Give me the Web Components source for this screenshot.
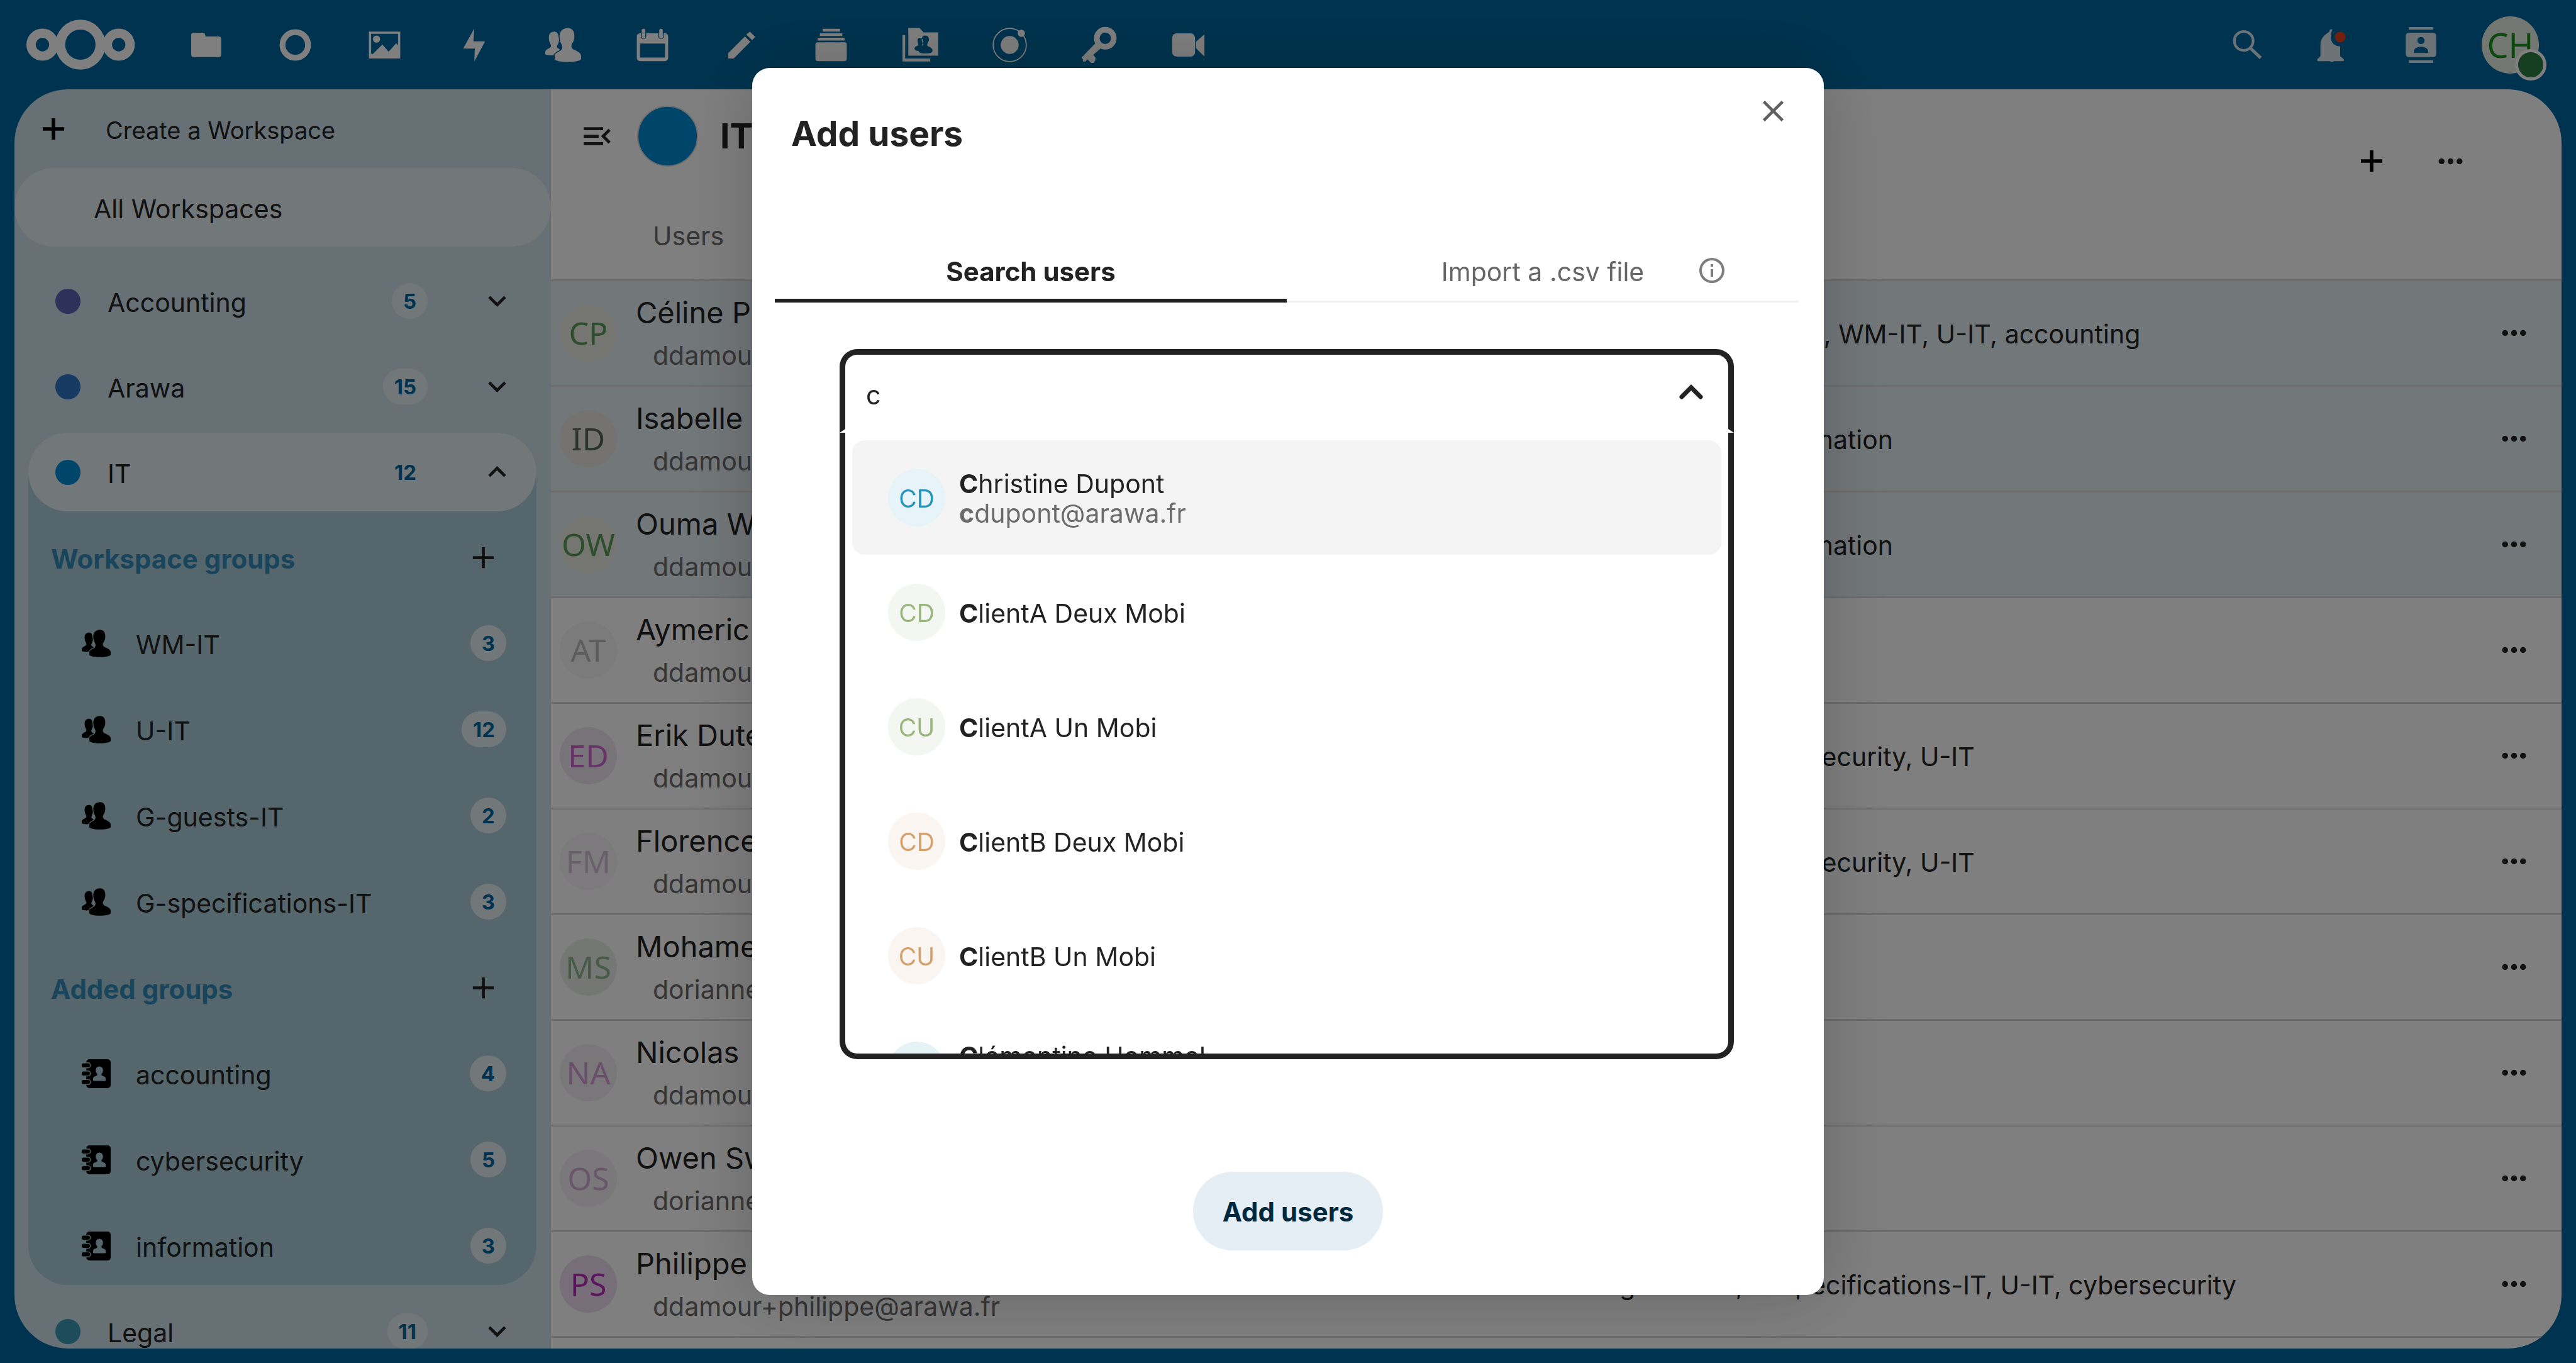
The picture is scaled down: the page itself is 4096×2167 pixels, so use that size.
<!DOCTYPE html>
<html lang="en">
<head>
<meta charset="utf-8">
<title>Workspaces - Add users</title>
<style>
  html, body { margin: 0; height: 100%; }
  body {
    --font: Inter, "Liberation Sans", sans-serif;
    --brand: #00679e;
    --light: #e5eef5;
    --side: #cce1eb;
    --panel: #abcdda;
    --ink: #222222;
    --muted: #6b6b6b;
    font: 400 41px/60px var(--font);
    color: var(--ink);
    background: var(--brand);
    overflow: hidden;
  }
</style>
</head>
<body>
<workspace-app></workspace-app>

<script>
const ICONS = {
  logo: ['0 0 244 112', '<g fill="none" stroke="currentColor"><circle cx="121" cy="56" r="45" stroke-width="22"/><circle cx="36" cy="56" r="25.5" stroke-width="21"/><circle cx="207" cy="56" r="25.5" stroke-width="21"/></g>'],
  folder: ['0 0 80 80', '<path d="M7 18q0-5 5-5h21q4 0 5 4l1 4h29q6 0 6 6v34q0 6-6 6H13q-6 0-6-6z"/>'],
  ring: ['0 0 80 80', '<circle cx="40" cy="40" r="28.5" fill="none" stroke="currentColor" stroke-width="13"/>'],
  photos: ['0 0 80 80', '<path fill-rule="evenodd" d="M5 10h70v60H5zM10 15v45h4l21-21 14 16 17-19 4 5V15z"/><circle cx="22" cy="27" r="8"/>'],
  bolt: ['0 0 80 80', '<path d="M41 3L16 48h26l-1 29 24-45H39z"/>'],
  people: ['0 0 80 80', '<path d="M50 2c10 0 15 7 15 18 0 8-2 13-5 17-3 5-2 10 3 13 9 4 17 7 17 15v6c0 4-12 7-30 7s-29-3-29-7V61c4-3 9-6 14-9 4-4 4-9 1-14-3-5-4-10-4-18C32 9 40 2 50 2z"/><path d="M20 10c-8 0-12 5-12 14 0 7 2 11 4 15s0 6-3 8c-5 3-9 4-9 10v3c0 2 8 4 18 3 2-5 8-8 15-12-1-2-4-3-6-5-2-3 1-6 2-10 2-3 2-8 1-13-1-9-4-13-10-13z"/>'],
  calendar: ['0 0 80 80', '<path fill-rule="evenodd" d="M13 14h1v7a6 6 0 0 0 12 0v-7h27v7a6 6 0 0 0 12 0v-7h2q8 0 8 8v46q0 8-8 8H13q-8 0-8-8V22q0-8 8-8zM12 37v31h56V37z"/><rect x="16" y="4" width="8" height="22" rx="4"/><rect x="55" y="4" width="8" height="22" rx="4"/>'],
  pencil: ['0 0 80 80', '<path d="M10 70V58l37-37 12 12-37 37zM50 17l8-7 12 12-7 7z"/>'],
  deck: ['0 0 80 80', '<path d="M21 4h39v6H21zM15 14h50v6H15zM10 24h60v6H10z"/><rect x="5" y="34" width="70" height="42" rx="5"/>'],
  groupfolder: ['0 0 80 80', '<path d="M0 18h6v52h56v7H0z"/><path fill-rule="evenodd" d="M13 2h25l9 10h33v52H13zM51 19c-5 0-8 3-8 9 0 4 1 7 3 9s0 4-2 5c-1-1 0-3 1-5 2-6 0-13-6-13-5 0-6 5-5 10 1 4 2 5 1 7-5 2-8 3-8 7s4 5 9 5c0 4 4 6 15 6s16-2 16-6c0-5-3-7-8-9-4-2-5-4-3-8 2-3 3-5 3-9 0-5-4-8-8-8z"/>'],
  orbit: ['0 0 80 80', '<circle cx="40" cy="40" r="37" fill="none" stroke="currentColor" stroke-width="2.500"/><circle cx="40" cy="40" r="20"/><circle cx="66" cy="14" r="8"/>'],
  key: ['0 0 80 80', '<circle cx="54" cy="25" r="19" fill="none" stroke="currentColor" stroke-width="12.500"/><path d="M33 35L1 68l3 4v5h6l4-5 8 8h6l4-6v-6l-5-6 20-17z"/>'],
  video: ['0 0 80 80', '<rect x="4" y="14" width="51" height="52" rx="10"/><path d="M57 33l19-17v50L57 47z"/>'],
  search: ['0 0 80 80', '<g fill="none" stroke="currentColor"><circle cx="43" cy="31" r="21" stroke-width="6"/><path d="M59 48l22 21" stroke-width="7"/></g>'],
  bell: ['0 0 80 80', '<path d="M35 10c0-5 4-6 7-4-3 5-4 10-4 16 0 12 7 20 20 21h1v22l8 7v4H8v-4l7-7V38c0-12 8-20 20-28zM34 72h13c-1 8-12 8-13 0z"/><circle cx="59" cy="22" r="12" fill="#e6421c"/>'],
  contacts: ['0 0 80 80', '<path d="M13 0h54v6H13zM13 74h54v6H13z"/><path fill-rule="evenodd" d="M13 13h54q7 0 7 7v40q0 7-7 7H13q-7 0-7-7V20q0-7 7-7zM40 22a8 8 0 1 0 0 16 8 8 0 0 0 0-16zM24 58h32v-4c0-6-8-10-16-10s-16 4-16 10z"/>'],
  book: ['0 0 64 64', '<rect x="10" y="0" width="54" height="64" rx="7"/><g stroke="var(--panel)" stroke-width="2"><rect x="-1" y="8" width="20" height="11" rx="5"/><rect x="-1" y="26" width="20" height="11" rx="5"/><rect x="-1" y="45" width="20" height="11" rx="5"/></g><path fill="var(--panel)" d="M39 16c5 0 8 4 8 8 0 5-1 6-3 8-1 3 0 4 2 5 4 1 7 3 7 6v4q0 1-2 1H27q-2 0-2-1v-4c0-3 3-5 7-6 2-1 3-2 2-5-2-2-3-3-3-8 0-4 3-8 8-8z"/>'],
  boldplus: ['0 0 48 48', '<path d="M20 0h8v20h20v8H28v20h-8V28H0v-8h20z"/>'],
  plus: ['0 0 24 24', '<path d="M19 13h-6v6h-2v-6H5v-2h6V5h2v6h6z"/>'],
  close: ['0 0 24 24', '<path d="M19 6.410L17.590 5 12 10.590 6.410 5 5 6.410 10.590 12 5 17.590 6.410 19 12 13.410 17.590 19 19 17.590 13.410 12z"/>'],
  down: ['0 0 24 24', '<path d="M7.410 8.580L12 13.170l4.590-4.590L18 10l-6 6-6-6z"/>'],
  up: ['0 0 24 24', '<path d="M7.410 15.410L12 10.830l4.590 4.580L18 14l-6-6-6 6z"/>'],
  caret: ['0 0 68 68', '<path d="M19 42l15-15 15 15" fill="none" stroke="currentColor" stroke-width="7" stroke-linecap="round"/>'],
  menu: ['0 0 24 24', '<path d="M21 15.610L19.590 17l-5.010-5 5.010-5L21 8.390 17.440 12zM3 6h13v2H3zM3 13v-2h10v2zM3 18v-2h13v2z"/>'],
  dots: ['0 0 24 24', '<circle cx="6" cy="12" r="2"/><circle cx="12" cy="12" r="2"/><circle cx="18" cy="12" r="2"/>'],
  info: ['0 0 24 24', '<path d="M11 9h2V7h-2m1 13c-4.410 0-8-3.590-8-8s3.590-8 8-8 8 3.590 8 8-3.590 8-8 8m0-18A10 10 0 0 0 2 12a10 10 0 0 0 10 10 10 10 0 0 0 10-10A10 10 0 0 0 12 2m-1 15h2v-6h-2z"/>']
};

const BASE = `
  *, *::before, *::after { box-sizing: border-box; }
  button, a, input { font: inherit; color: inherit; border: 0; background: none; padding: 0; margin: 0; text-align: left; text-decoration: none; outline: 0; border-radius: 0; }
  ul { list-style: none; margin: 0; padding: 0; }
`;

class Base extends HTMLElement {
  connectedCallback() {
    if (this.shadowRoot) return;
    const root = this.attachShadow({ mode: 'open' });
    root.innerHTML = `<style>${BASE}${this.styles()}</style>${this.view()}`;
  }
  get(name) { return this.getAttribute(name) || ''; }
  styles() { return ''; }
  view() { return '<slot></slot>'; }
}

customElements.define('nc-icon', class extends Base {
  styles() { return ':host { display: block; flex: none; width: 57px; height: 57px; } svg { display: block; width: 100%; height: 100%; overflow: visible; }'; }
  view() {
    const [box, body] = ICONS[this.get('name')];
    return `<svg viewBox="${box}" fill="currentColor" aria-hidden="true">${body}</svg>`;
  }
});

customElements.define('nc-avatar', class extends Base {
  styles() {
    return `:host { display: flex; flex: none; align-items: center; justify-content: center; width: 91px; height: 91px; border-radius: 50%;
      font: 400 50px/91px "Noto Sans", sans-serif; background: ${this.get('bg')}; color: ${this.get('fg')}; }
      :host([plain]) { padding-top: 2px; font: 400 39px/89px var(--font); }`;
  }
});

customElements.define('nc-counter', class extends Base {
  styles() {
    return `:host { display: block; flex: none; min-width: 57px; height: 57px; padding: 0 18px; border-radius: 29px; text-align: center;
      font: 700 33px/58px var(--font); background: var(--light); color: var(--brand); }`;
  }
});

customElements.define('app-header', class extends Base {
  styles() {
    return `
    :host { display: flex; align-items: center; height: 142px; padding: 0 59px 0 42px; color: #fff; }
    .logo { width: 173px; height: 80px; margin-right: 84px; }
    nav, .tools { display: flex; align-items: center; gap: 85px; }
    .tools { margin-left: auto; color: #d9e6ee; }
    .me { position: relative; margin-left: -17px; }
    .me nc-avatar { font-size: 54px; }
    .me i { position: absolute; right: -12px; bottom: -11px; width: 50px; height: 50px; border: 5px solid #fff; border-radius: 50%; background: #2d7d41; }
    `;
  }
  view() {
    const apps = ['folder', 'ring', 'photos', 'bolt', 'people', 'calendar', 'pencil', 'deck', 'groupfolder', 'orbit', 'key', 'video'];
    return `<a href="#"><nc-icon class="logo" name="logo"></nc-icon></a>
      <nav>${apps.map(a => `<a href="#" aria-label="${a}"><nc-icon name="${a}"></nc-icon></a>`).join('')}</nav>
      <div class="tools">
        <button aria-label="Search"><nc-icon name="search"></nc-icon></button>
        <button aria-label="Notifications"><nc-icon name="bell"></nc-icon></button>
        <button aria-label="Contacts"><nc-icon name="contacts"></nc-icon></button>
        <button class="me"><nc-avatar bg="#e6efe2" fg="#1c901c">CH</nc-avatar><i></i></button>
      </div>`;
  }
});

customElements.define('workspace-item', class extends Base {
  styles() {
    return `
    :host { display: block; margin-bottom: 11px; }
    .row { display: flex; align-items: center; height: 125px; padding: 0 34px 0 43px; border-radius: 63px; }
    :host([active]) .row { background: var(--light); }
    i { width: 40px; height: 40px; border-radius: 50%; background: ${this.get('color')}; }
    a { flex: 1; padding: 4px 0 0 43px; }
    nc-counter { margin-right: 82px; }
    `;
  }
  view() {
    return `<div class="row"><i></i><a href="#">${this.get('name')}</a><nc-counter>${this.get('count')}</nc-counter>
      <button aria-label="Toggle"><nc-icon name="${this.hasAttribute('active') ? 'up' : 'down'}"></nc-icon></button></div><slot></slot>`;
  }
});

customElements.define('group-heading', class extends Base {
  styles() {
    return `:host { display: flex; align-items: center; justify-content: space-between; height: 125px; margin-bottom: 11px; padding: 0 56px 0 36px;
      font-size: 42px; font-weight: 700; color: #308ab8; } span { padding-top: 4px; } button { color: var(--ink); }`;
  }
  view() { return '<span><slot></slot></span><button aria-label="Add group"><nc-icon name="plus"></nc-icon></button>'; }
});

customElements.define('group-item', class extends Base {
  styles() {
    return `:host { display: flex; align-items: center; height: 125px; margin-bottom: 12px; padding: 0 48px 0 85px; }
      :host(:last-child) { margin-bottom: 0; }
      nc-icon { width: 46px; height: 46px; color: #000; }
      a { flex: 1; padding: 4px 0 0 40px; }`;
  }
  view() { return `<nc-icon name="${this.get('icon')}"></nc-icon><a href="#"><slot></slot></a><nc-counter>${this.get('count')}</nc-counter>`; }
});

customElements.define('workspace-sidebar', class extends Base {
  styles() {
    return `
    :host { display: block; flex: none; width: 853px; background: var(--side); overflow: hidden; }
    .create { display: flex; align-items: center; gap: 66px; width: 100%; height: 125px; padding-left: 45px; font-size: 38px; }
    .create nc-icon { width: 34px; height: 34px; color: #000; }
    .create span { padding-top: 4px; }
    .all { display: flex; align-items: center; height: 125px; margin-bottom: 24px; padding: 4px 0 0 126px; border-radius: 63px; background: var(--light); }
    .list { padding: 0 23px 0 22px; }
    .open { border-radius: 63px; background: var(--panel); margin-bottom: 11px; }
    `;
  }
  view() {
    return `<button class="create"><nc-icon name="boldplus"></nc-icon><span>Create a Workspace</span></button>
    <a class="all" href="#">All Workspaces</a>
    <div class="list">
      <workspace-item name="Accounting" count="5" color="#5c64b4"></workspace-item>
      <workspace-item name="Arawa" count="15" color="#2d74c4"></workspace-item>
      <div class="open">
        <workspace-item active name="IT" count="12" color="#008cd4"></workspace-item>
        <group-heading>Workspace groups</group-heading>
        <group-item icon="people" count="3">WM-IT</group-item>
        <group-item icon="people" count="12">U-IT</group-item>
        <group-item icon="people" count="2">G-guests-IT</group-item>
        <group-item icon="people" count="3">G-specifications-IT</group-item>
        <group-heading>Added groups</group-heading>
        <group-item icon="book" count="4">accounting</group-item>
        <group-item icon="book" count="5">cybersecurity</group-item>
        <group-item icon="book" count="3">information</group-item>
      </div>
      <workspace-item name="Legal" count="11" color="#389bb2"></workspace-item>
    </div>`;
  }
});

const USERS = [
  ['CP', '#ebece4', '#5a9a5a', 'Céline P', 'ddamour', 'G-specifications-IT, WM-IT, U-IT, accounting', 1],
  ['ID', '#eae6e4', '#586458', 'Isabelle', 'ddamour', 'WM-IT, U-IT, information', 1],
  ['OW', '#ebece4', '#5a9a5a', 'Ouma W', 'ddamour', 'WM-IT, U-IT, information', 1],
  ['AT', '#f6f6f6', '#b8bcb8', 'Aymeric', 'ddamour', 'U-IT'],
  ['ED', '#f0e4f2', '#cc68d0', 'Erik Dute', 'ddamour', 'accounting, cybersecurity, U-IT'],
  ['FM', '#f8f5f8', '#d4c0d6', 'Florence', 'ddamour', 'accounting, cybersecurity, U-IT'],
  ['MS', '#e8efe8', '#90b490', 'Mohame', 'dorianne', 'U-IT'],
  ['NA', '#f3eef4', '#d49cd6', 'Nicolas', 'ddamour', 'G-specifications-IT'],
  ['OS', '#f5f0f5', '#d4acd6', 'Owen Sw', 'dorianne', 'U-IT'],
  ['PS', '#f0dcf2', '#b82cbc', 'Philippe', 'ddamour+philippe@arawa.fr', 'G-guests-IT, G-specifications-IT, U-IT, cybersecurity']
];

customElements.define('user-table', class extends Base {
  styles() {
    return `
    :host { display: block; }
    table { width: 100%; table-layout: fixed; border-spacing: 0; }
    .users { width: 51.6%; } .more { width: 104px; }
    th { height: 138px; padding: 0 0 0 162px; text-align: left; font-weight: 400; color: var(--muted); }
    td { height: 168px; padding: 0; border-top: 3px solid #dbdbdb; white-space: nowrap; }
    tr:last-child td { height: 171px; border-bottom: 3px solid #dbdbdb; }
    .sel td { background: var(--light); }
    .user { display: flex; align-items: center; gap: 30px; padding-left: 14px; }
    .user p { margin: 0; padding-top: 2px; line-height: 68px; }
    .name { display: block; font-size: 47px; }
    .mail { display: block; padding-left: 27px; color: var(--muted); }
    td:nth-child(2) { padding-top: 3px; }
    button { display: block; }
    `;
  }
  view() {
    const rows = USERS.map(([ini, bg, fg, name, mail, groups, sel]) => `<tr class="${sel ? 'sel' : ''}">
      <td><div class="user"><nc-avatar bg="${bg}" fg="${fg}">${ini}</nc-avatar><p><span class="name">${name}</span><span class="mail">${mail}</span></p></div></td>
      <td>${groups}</td>
      <td><button aria-label="Actions"><nc-icon name="dots"></nc-icon></button></td></tr>`).join('');
    return `<table><colgroup><col class="users"><col><col class="more"></colgroup>
      <thead><tr><th colspan="3">Users</th></tr></thead><tbody>${rows}</tbody></table>`;
  }
});

customElements.define('workspace-main', class extends Base {
  styles() {
    return `
    :host { display: block; flex: 1; min-width: 0; background: #fff; overflow: hidden; }
    .bar { display: flex; justify-content: space-between; height: 164px; }
    .title { display: flex; align-items: center; height: 148px; padding-left: 45px; }
    .title i { width: 97px; height: 97px; margin: 0 35px; border-radius: 50%; border: 2px solid #dbdbdb; background: #008cd4; }
    h1 { margin: 0; font-size: 55px; font-weight: 700; }
    .actions { display: flex; align-items: center; align-self: flex-end; gap: 80px; height: 100px; padding-right: 148px; }
    .plus { width: 34px; height: 34px; color: #000; }
    `;
  }
  view() {
    return `<div class="bar">
      <div class="title"><button aria-label="Close navigation"><nc-icon name="menu"></nc-icon></button><i></i><h1>IT</h1></div>
      <div class="actions"><button aria-label="Add"><nc-icon class="plus" name="boldplus"></nc-icon></button><button aria-label="More"><nc-icon name="dots"></nc-icon></button></div>
    </div><user-table></user-table>`;
  }
});

customElements.define('user-select', class extends Base {
  styles() {
    return `
    :host { display: block; margin: 74px 143px 0 139px; }
    .field { display: flex; align-items: center; height: 133px; padding: 0 25px 0 33px; border: 9px solid var(--ink); border-bottom: 6px solid #fff; border-radius: 28px 28px 0 0; }
    input { flex: 1; min-width: 0; height: 80px; padding-top: 10px; }
    .field nc-icon { width: 68px; height: 68px; }
    ul { height: 996px; padding: 12px 11px 0; overflow: hidden; border: 9px solid var(--ink); border-top: 0; border-radius: 0 0 28px 28px; }
    li { display: flex; align-items: center; gap: 22px; height: 182px; padding-left: 57px; border-radius: 20px; line-height: 47px; }
    li.on { background: #f4f4f4; }
    li span { padding-top: 4px; }
    small { display: block; font-size: 41px; color: var(--muted); }
    `;
  }
  view() {
    const opts = [
      ['CD', '#e6f3f8', '#2793ba', 'Christine Dupont', 'cdupont@arawa.fr'],
      ['CD', '#f4f6f1', '#98b67e', 'ClientA Deux Mobi'],
      ['CU', '#f4f6f1', '#98b67e', 'ClientA Un Mobi'],
      ['CD', '#faf5f1', '#d4a06c', 'ClientB Deux Mobi'],
      ['CU', '#faf5f1', '#d4a06c', 'ClientB Un Mobi'],
      ['CH', '#e6f3f6', '#2793ba', 'Clémentine Hommel', 'chommel@arawa.fr']
    ];
    const hit = t => `<b>${t[0]}</b>${t.slice(1)}`;
    return `<div class="field"><input id="q" type="text" value="c" aria-label="Search users"><button aria-label="Close list"><nc-icon name="caret"></nc-icon></button></div>
    <ul role="listbox">${opts.map(([i, bg, fg, n, m], k) => `<li role="option" class="${k ? '' : 'on'}"><nc-avatar plain bg="${bg}" fg="${fg}">${i}</nc-avatar><span>${hit(n)}${m ? `<small>${hit(m)}</small>` : ''}</span></li>`).join('')}</ul>`;
  }
});

customElements.define('add-users-modal', class extends Base {
  styles() {
    return `
    :host { position: fixed; inset: 0; display: grid; place-items: center; background: rgba(0, 0, 0, .5); }
    section { width: min(1704px, 94vw); padding-bottom: 71px; border-radius: 28px; background: #fff; box-shadow: 0 0 114px rgba(0, 0, 0, .2); }
    header { display: flex; justify-content: space-between; align-items: center; height: 208px; margin-bottom: 65px; padding: 0 18px 0 62px; }
    h2 { margin: 0; font-size: 55px; font-weight: 700; }
    .close { display: grid; place-items: center; align-self: flex-start; width: 125px; height: 137px; color: #606060; }
    .tabs { display: grid; grid-template-columns: 1fr 1fr; height: 100px; margin: 0 40px 0 36px; }
    .tab { display: grid; grid-template-columns: 1fr auto 1fr; align-items: center; border-bottom: 3px solid #f0f0f0; color: #666; }
    .tab > button:first-child { grid-column: 2; padding-top: 5px; }
    .tab.on { border-bottom: 6px solid var(--ink); color: var(--ink); font-size: 42px; font-weight: 700; }
    .tab.on > button:first-child { padding-top: 7px; }
    .info { padding-left: 84px; color: #7d7d7d; }
    .info nc-icon { width: 48px; height: 48px; }
    footer { display: flex; justify-content: center; margin-top: 179px; }
    .add { height: 125px; padding: 3px 47px 0; border-radius: 63px; background: var(--light); color: #00293f; font-size: 42px; font-weight: 700; }
    `;
  }
  view() {
    return `<section role="dialog" aria-modal="true" aria-labelledby="t">
      <header><h2 id="t">Add users</h2><button class="close" aria-label="Close"><nc-icon name="close"></nc-icon></button></header>
      <div class="tabs"><div class="tab on"><button>Search users</button></div>
      <div class="tab"><button>Import a .csv file</button><button class="info" aria-label="Information"><nc-icon name="info"></nc-icon></button></div></div>
      <user-select></user-select>
      <footer><button class="add">Add users</button></footer>
    </section>`;
  }
});

customElements.define('workspace-app', class extends Base {
  styles() {
    return `
    :host { display: flex; flex-direction: column; height: 100vh; }
    main { display: flex; flex: 1; min-height: 0; margin: 0 23px 23px; border-radius: 85px; overflow: hidden; }
    `;
  }
  view() {
    return `<app-header></app-header>
      <main><workspace-sidebar></workspace-sidebar><workspace-main></workspace-main></main>
      <add-users-modal></add-users-modal>`;
  }
});
</script>
</body>
</html>
